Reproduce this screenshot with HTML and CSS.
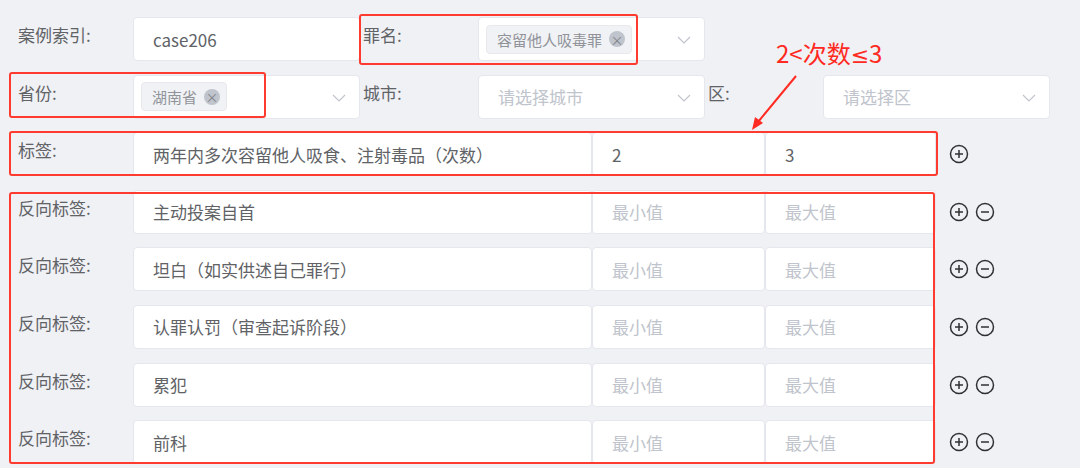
FILE: index.html
```html
<!DOCTYPE html>
<html lang="zh-CN">
<head>
  <meta charset="UTF-8" />
  <title>案例标签</title>
  <link rel="stylesheet" href="styles.css">
</head>
<body>
  <div class="page">
    <div class="row">
      <div class="field">
        <span class="label">案例索引:</span>
        <div class="control">case206</div>
      </div>
      <div class="field">
        <span class="label">罪名:</span>
        <div class="control select">
          <span class="tag">容留他人吸毒罪<i class="tag-close">×</i></span>
          <svg class="chevron" viewBox="0 0 14 8"><path d="M1 1l6 6 6-6" /></svg>
        </div>
      </div>
    </div>

    <div class="row">
      <div class="field">
        <span class="label">省份:</span>
        <div class="control select">
          <span class="tag">湖南省<i class="tag-close">×</i></span>
          <svg class="chevron" viewBox="0 0 14 8"><path d="M1 1l6 6 6-6" /></svg>
        </div>
      </div>
      <div class="field">
        <span class="label">城市:</span>
        <div class="control select placeholder">
          请选择城市
          <svg class="chevron" viewBox="0 0 14 8"><path d="M1 1l6 6 6-6" /></svg>
        </div>
      </div>
      <div class="field">
        <span class="label">区:</span>
        <div class="control select placeholder">
          请选择区
          <svg class="chevron" viewBox="0 0 14 8"><path d="M1 1l6 6 6-6" /></svg>
        </div>
      </div>
    </div>

    <div class="row">
      <span class="label">标签:</span>
      <div class="control name">两年内多次容留他人吸食、注射毒品（次数）</div>
      <div class="control min">2</div>
      <div class="control max">3</div>
      <div class="actions">
        <svg class="op" viewBox="0 0 20 20"><circle cx="10" cy="10" r="8.5" /><path d="M6 10h8M10 6v8" /></svg>
      </div>
    </div>

    <div class="row">
      <span class="label">反向标签:</span>
      <div class="control name">主动投案自首</div>
      <div class="control min placeholder">最小值</div>
      <div class="control max placeholder">最大值</div>
      <div class="actions">
        <svg class="op" viewBox="0 0 20 20"><circle cx="10" cy="10" r="8.5" /><path d="M6 10h8M10 6v8" /></svg>
        <svg class="op" viewBox="0 0 20 20"><circle cx="10" cy="10" r="8.5" /><path d="M6 10h8" /></svg>
      </div>
    </div>

    <div class="row">
      <span class="label">反向标签:</span>
      <div class="control name">坦白（如实供述自己罪行）</div>
      <div class="control min placeholder">最小值</div>
      <div class="control max placeholder">最大值</div>
      <div class="actions">
        <svg class="op" viewBox="0 0 20 20"><circle cx="10" cy="10" r="8.5" /><path d="M6 10h8M10 6v8" /></svg>
        <svg class="op" viewBox="0 0 20 20"><circle cx="10" cy="10" r="8.5" /><path d="M6 10h8" /></svg>
      </div>
    </div>

    <div class="row">
      <span class="label">反向标签:</span>
      <div class="control name">认罪认罚（审查起诉阶段）</div>
      <div class="control min placeholder">最小值</div>
      <div class="control max placeholder">最大值</div>
      <div class="actions">
        <svg class="op" viewBox="0 0 20 20"><circle cx="10" cy="10" r="8.5" /><path d="M6 10h8M10 6v8" /></svg>
        <svg class="op" viewBox="0 0 20 20"><circle cx="10" cy="10" r="8.5" /><path d="M6 10h8" /></svg>
      </div>
    </div>

    <div class="row">
      <span class="label">反向标签:</span>
      <div class="control name">累犯</div>
      <div class="control min placeholder">最小值</div>
      <div class="control max placeholder">最大值</div>
      <div class="actions">
        <svg class="op" viewBox="0 0 20 20"><circle cx="10" cy="10" r="8.5" /><path d="M6 10h8M10 6v8" /></svg>
        <svg class="op" viewBox="0 0 20 20"><circle cx="10" cy="10" r="8.5" /><path d="M6 10h8" /></svg>
      </div>
    </div>

    <div class="row">
      <span class="label">反向标签:</span>
      <div class="control name">前科</div>
      <div class="control min placeholder">最小值</div>
      <div class="control max placeholder">最大值</div>
      <div class="actions">
        <svg class="op" viewBox="0 0 20 20"><circle cx="10" cy="10" r="8.5" /><path d="M6 10h8M10 6v8" /></svg>
        <svg class="op" viewBox="0 0 20 20"><circle cx="10" cy="10" r="8.5" /><path d="M6 10h8" /></svg>
      </div>
    </div>

    <!-- red annotations drawn over the form -->
    <div class="mark mark-crime"></div>
    <div class="mark mark-province"></div>
    <div class="mark mark-tag"></div>
    <div class="mark mark-reverse"></div>
    <div class="note">2&lt;次数<span class="le">≤</span>3</div>
    <svg class="arrow" viewBox="0 0 50 60">
      <path d="M46 4L8 50" />
      <path class="head" d="M2 58l3-13 8 6z" />
    </svg>
  </div>
</body>
</html>
```

FILE: styles.css
```css
body {
  margin: 0;
  background-color: #f0f1f5;
  font-family: "Noto Sans CJK SC", "Noto Sans", sans-serif;
  color: #606266;
}

.page {
  position: relative;
  width: 1080px;
  height: 468px;
  box-sizing: border-box;
  padding: 17px 0 0 18px;
  overflow: hidden;
}

.row {
  display: flex;
  height: 44px;
  margin-bottom: 13.6px;
}

.field {
  display: flex;
  margin-right: 3px;
}

.label {
  width: 115px;
  flex-shrink: 0;
  padding-top: 7px;
  line-height: 22px;
  font-size: 17px;
  color: #606266;
}

.control {
  box-sizing: border-box;
  height: 44px;
  background: #fff;
  border: 1px solid #e4e7ed;
  border-radius: 4px;
  padding: 0 19px;
  display: flex;
  align-items: center;
  font-size: 17px;
  color: #606266;
  width: 227px;
}

.select {
  position: relative;
  padding-left: 7px;
  justify-content: space-between;
}

.select.placeholder {
  padding-left: 19px;
}

.placeholder {
  color: #c0c4cc;
}

.chevron {
  position: absolute;
  right: 13px;
  top: 18px;
  width: 14px;
  height: 8px;
  fill: none;
  stroke: #c0c4cc;
  stroke-width: 1.2;
}

.tag {
  display: inline-flex;
  align-items: center;
  height: 29px;
  box-sizing: border-box;
  padding: 0 6px 0 10px;
  background: #f0f2f5;
  border: 1px solid #e9e9eb;
  border-radius: 4px;
  font-size: 15px;
  color: #909399;
}

.tag-close {
  display: inline-flex;
  align-items: center;
  justify-content: center;
  width: 16px;
  height: 16px;
  margin-left: 7px;
  border-radius: 50%;
  background: #c0c4cc;
  color: #7f8289;
  font-style: normal;
  font-size: 13px;
  line-height: 1;
}

.name {
  width: 459px;
}

.min {
  width: 173px;
}

.max {
  width: 171px;
}

.actions {
  display: flex;
  align-items: center;
  gap: 6px;
  margin-left: 13px;
}

.op {
  width: 20px;
  height: 20px;
  fill: none;
  stroke: #303133;
  stroke-width: 1.5;
}

.mark {
  position: absolute;
  box-sizing: border-box;
  border: 2px solid #ff3b30;
  border-radius: 3px;
}

.mark-crime {
  left: 359px;
  top: 14px;
  width: 279px;
  height: 51px;
}

.mark-province {
  left: 9px;
  top: 72px;
  width: 257px;
  height: 46px;
}

.mark-tag {
  left: 9px;
  top: 131px;
  width: 929px;
  height: 45px;
}

.mark-reverse {
  left: 9px;
  top: 192px;
  width: 926px;
  height: 272px;
}

.note {
  position: absolute;
  left: 776px;
  top: 36px;
  font-size: 24px;
  line-height: 34px;
  color: #ff2a22;
}

.note .le {
  font-family: "DejaVu Sans", sans-serif;
  font-size: 22px;
}

.arrow {
  position: absolute;
  left: 750px;
  top: 72px;
  width: 50px;
  height: 60px;
  fill: none;
  stroke: #ff2a22;
  stroke-width: 2;
}

.arrow .head {
  fill: #ff2a22;
  stroke: none;
}
```
